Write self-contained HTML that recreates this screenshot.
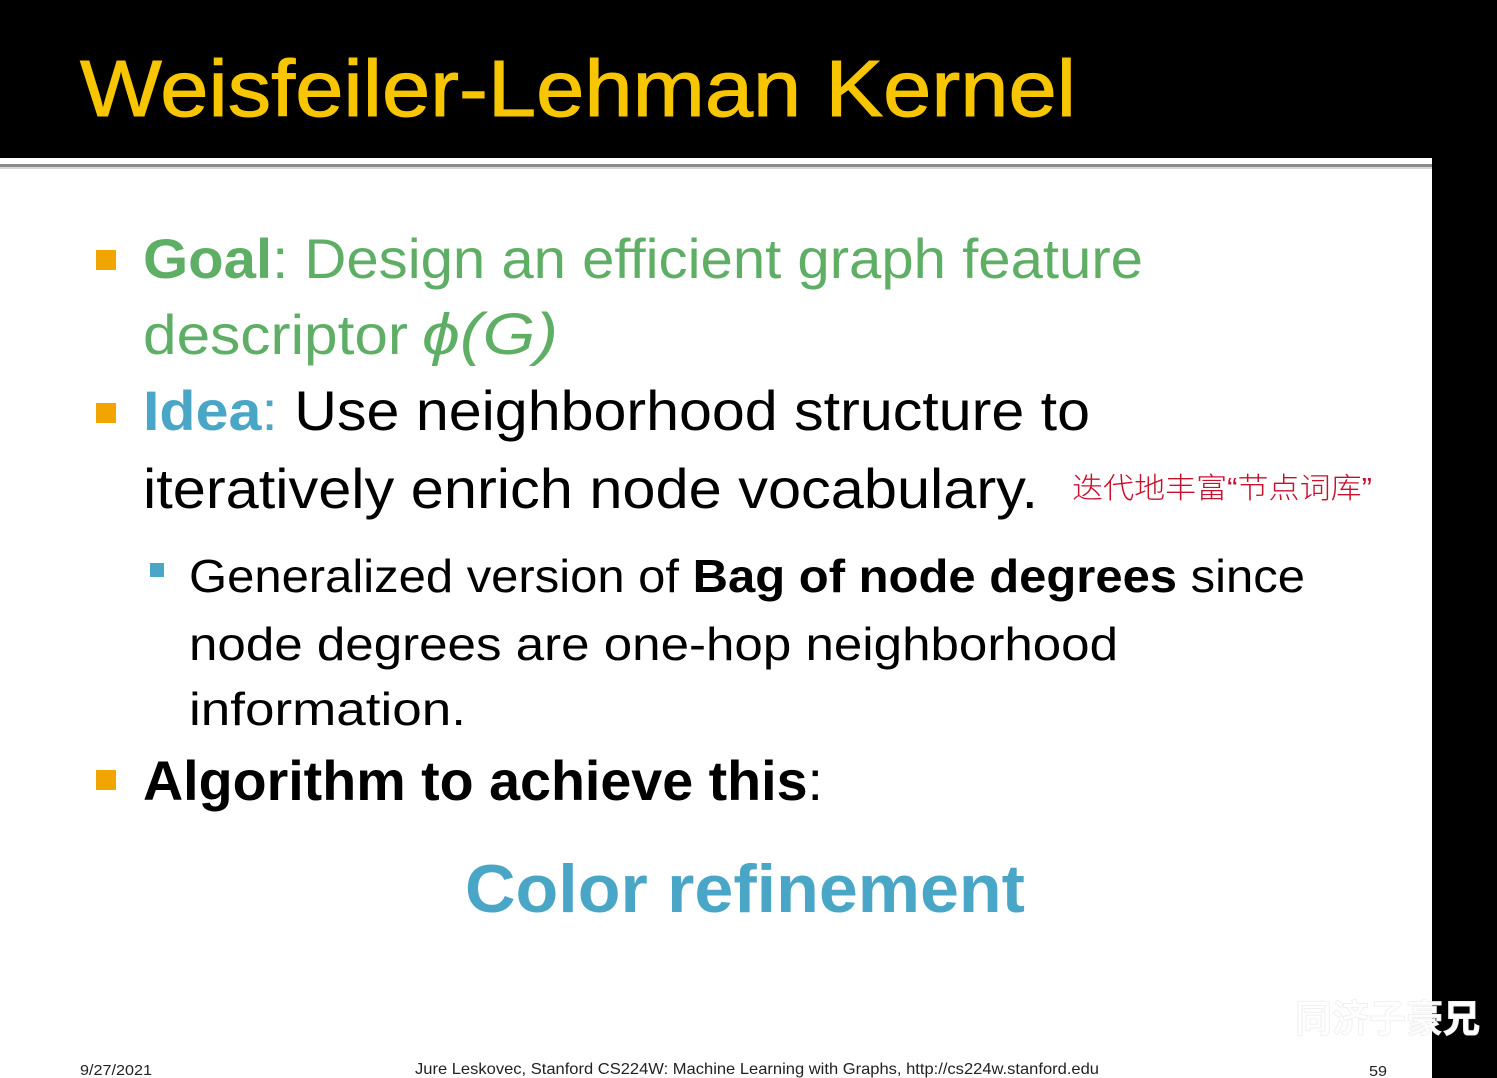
<!DOCTYPE html>
<html><head><meta charset="utf-8"><style>
html,body{margin:0;padding:0;background:#fff;}
svg{display:block;}
text{font-family:"Liberation Sans","Noto Sans CJK SC",sans-serif;}
</style></head><body>
<svg width="1497" height="1078" viewBox="0 0 1497 1078" xmlns="http://www.w3.org/2000/svg">
<rect x="0" y="0" width="1497" height="1078" fill="#fff"/>
<rect x="0" y="0" width="1497" height="158" fill="#000"/>
<rect x="0" y="158" width="1432" height="6" fill="#fff"/>
<rect x="0" y="164" width="1432" height="3" fill="#8a8a8a"/>
<rect x="0" y="167" width="1432" height="2" fill="#d8d8d8"/>
<rect x="1432" y="0" width="65" height="1078" fill="#000"/>
<text x="80" y="116" font-size="80" fill="#f7c600" stroke="#f7c600" stroke-width="1" textLength="996" lengthAdjust="spacingAndGlyphs">Weisfeiler-Lehman Kernel</text>

<rect x="96" y="250" width="20" height="20" fill="#f0a500"/>
<text x="143" y="278" font-size="56" fill="#5fae66" textLength="1000" lengthAdjust="spacingAndGlyphs"><tspan font-weight="bold">Goal</tspan>: Design an efficient graph feature</text>
<text x="143" y="354" font-size="56" fill="#5fae66" textLength="265" lengthAdjust="spacingAndGlyphs">descriptor</text>
<text x="422" y="354" font-size="58" fill="#5fae66" font-family="Liberation Serif, serif" font-style="italic" textLength="136" lengthAdjust="spacingAndGlyphs">ϕ(G)</text>

<rect x="96" y="403" width="20" height="20" fill="#f0a500"/>
<text x="143" y="430" font-size="56" fill="#000" textLength="947" lengthAdjust="spacingAndGlyphs"><tspan font-weight="bold" fill="#4aa6c6">Idea</tspan><tspan fill="#4aa6c6">:</tspan> Use neighborhood structure to</text>
<text x="143" y="508" font-size="56" fill="#000" textLength="895" lengthAdjust="spacingAndGlyphs">iteratively enrich node vocabulary.</text>
<text x="1072" y="498" font-size="29" fill="#c8102e" font-family="Noto Sans CJK SC, sans-serif" font-weight="300" textLength="300" lengthAdjust="spacingAndGlyphs">迭代地丰富“节点词库”</text>

<rect x="150" y="563" width="14" height="14" fill="#4aa6c6"/>
<text x="189" y="592" font-size="46" fill="#000" textLength="1116" lengthAdjust="spacingAndGlyphs">Generalized version of <tspan font-weight="bold">Bag of node degrees</tspan> since</text>
<text x="189" y="660" font-size="46" fill="#000" textLength="929" lengthAdjust="spacingAndGlyphs">node degrees are one-hop neighborhood</text>
<text x="189" y="725" font-size="46" fill="#000" textLength="277" lengthAdjust="spacingAndGlyphs">information.</text>

<rect x="96" y="770" width="20" height="20" fill="#f0a500"/>
<text x="143" y="800" font-size="56" fill="#000" textLength="680" lengthAdjust="spacingAndGlyphs"><tspan font-weight="bold">Algorithm to achieve this</tspan>:</text>

<text x="465" y="912" font-size="68" font-weight="bold" fill="#4aa6c6" textLength="560" lengthAdjust="spacingAndGlyphs">Color refinement</text>

<text x="1295" y="1032" font-size="38" font-weight="bold" fill="#ffffff" stroke="#f0f0f0" stroke-width="1" font-family="Noto Sans CJK SC, sans-serif" textLength="185" lengthAdjust="spacingAndGlyphs">同济子豪兄</text>

<text x="80" y="1075" font-size="15" fill="#222" textLength="72" lengthAdjust="spacingAndGlyphs">9/27/2021</text>
<text x="415" y="1074" font-size="16" fill="#222" textLength="684" lengthAdjust="spacingAndGlyphs">Jure Leskovec, Stanford CS224W: Machine Learning with Graphs, http://cs224w.stanford.edu</text>
<text x="1369" y="1076" font-size="15" fill="#222" textLength="18" lengthAdjust="spacingAndGlyphs">59</text>
</svg>
</body></html>
